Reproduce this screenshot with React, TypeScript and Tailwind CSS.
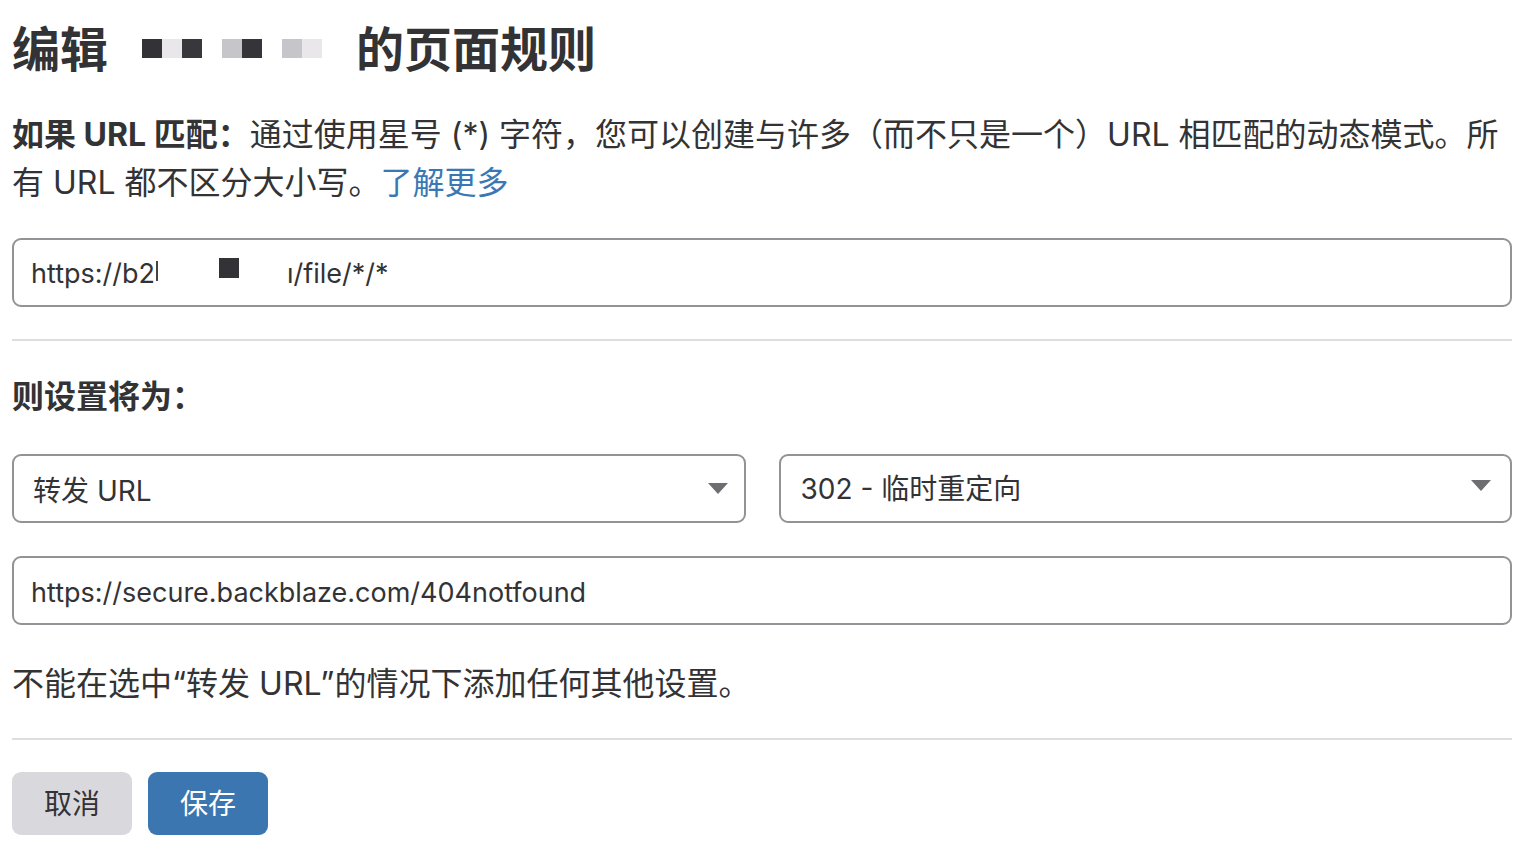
const font = "font-['Inter','Noto_Sans_CJK_SC',sans-serif]";

const Caret = () => (
  <svg width="20" height="11" viewBox="0 0 20 11" className="shrink-0">
    <path d="M0 0 L20 0 L10 11 Z" fill="#6d6d72" />
  </svg>
);

const Redacted = () => (
  <span className="inline-flex items-center align-middle mx-[34px] -translate-y-[2px]">
    <span className="flex">
      <span className="w-5 h-[19px] bg-[#333236]" />
      <span className="w-5 h-[19px] bg-[#e9e7ea]" />
      <span className="w-5 h-[19px] bg-[#38373b]" />
    </span>
    <span className="flex ml-5">
      <span className="w-5 h-[19px] bg-[#c6c5c9]" />
      <span className="w-5 h-[19px] bg-[#353438]" />
    </span>
    <span className="flex ml-5">
      <span className="w-5 h-[19px] bg-[#c6c5c9]" />
      <span className="w-5 h-[19px] bg-[#e9e7ea]" />
    </span>
  </span>
);

const App = () => {
  return (
    <div className={`min-h-screen bg-white text-[#333335] ${font}`}>
      <div className="w-[1500px] ml-3 pt-[21px]">
        <h1 className="text-[48px] leading-[58px] font-bold flex items-center">
          <span>编辑</span>
          <Redacted />
          <span>的页面规则</span>
        </h1>

        <p className="mt-[32px] text-[32px] leading-[48px]">
          <span className="font-bold">如果 URL 匹配：</span>
          通过使用星号 (*) 字符，您可以创建与许多（而不只是一个）URL 相匹配的动态模式。所有 URL 都不区分大小写。
          <a className="text-[#3a78b5]">了解更多</a>
        </p>

        <div className="mt-[31px] h-[69px] border-2 border-[#939397] rounded-[9px] flex items-center px-[17px] pt-[4px] text-[27px]">
          <span>https://b2</span>
          <span className="w-[3px] h-[24px] overflow-hidden -mt-[4px] ml-px">
            <span className="block w-[2px] h-[20px] bg-[#444]" />
          </span>
          <span className="w-[20px] h-[20px] bg-[#333236] ml-[60px] -mt-[14px]" />
          <span className="ml-[48px]">ı/file/*/*</span>
        </div>

        <div className="mt-[32px] h-[2px] bg-[#dedee0]" />

        <h2 className="mt-[32px] text-[32px] leading-[48px] font-bold">则设置将为：</h2>

        <div className="mt-[33px] grid grid-cols-2 gap-[33px]">
          <div className="h-[69px] border-2 border-[#939397] rounded-[9px] flex items-center justify-between pl-[19px] pr-[16px] text-[28px]">
            <span className="mt-[4px]">转发 URL</span>
            <Caret />
          </div>
          <div className="h-[69px] border-2 border-[#939397] rounded-[9px] flex items-center justify-between pl-[20px] pr-[19px] text-[28px]">
            <span>302 - 临时重定向</span>
            <span className="-mt-[6px]">
              <Caret />
            </span>
          </div>
        </div>

        <div className="mt-[33px] h-[69px] border-2 border-[#939397] rounded-[9px] flex items-center px-[17px] pt-[5px] text-[27px]">
          https://secure.backblaze.com/404notfound
        </div>

        <p className="mt-[35px] text-[32px] leading-[48px]">
          不能在选中“转发 URL”的情况下添加任何其他设置。
        </p>

        <div className="mt-[30px] h-[2px] bg-[#dedee0]" />

        <div className="mt-[32px] flex gap-4">
          <button className="w-[120px] h-[63px] rounded-[9px] bg-[#d9d9dd] text-[28px] text-[#333335]">
            取消
          </button>
          <button className="w-[120px] h-[63px] rounded-[9px] bg-[#3b76b0] text-[28px] text-white">
            保存
          </button>
        </div>
      </div>
    </div>
  );
};

export default App;
